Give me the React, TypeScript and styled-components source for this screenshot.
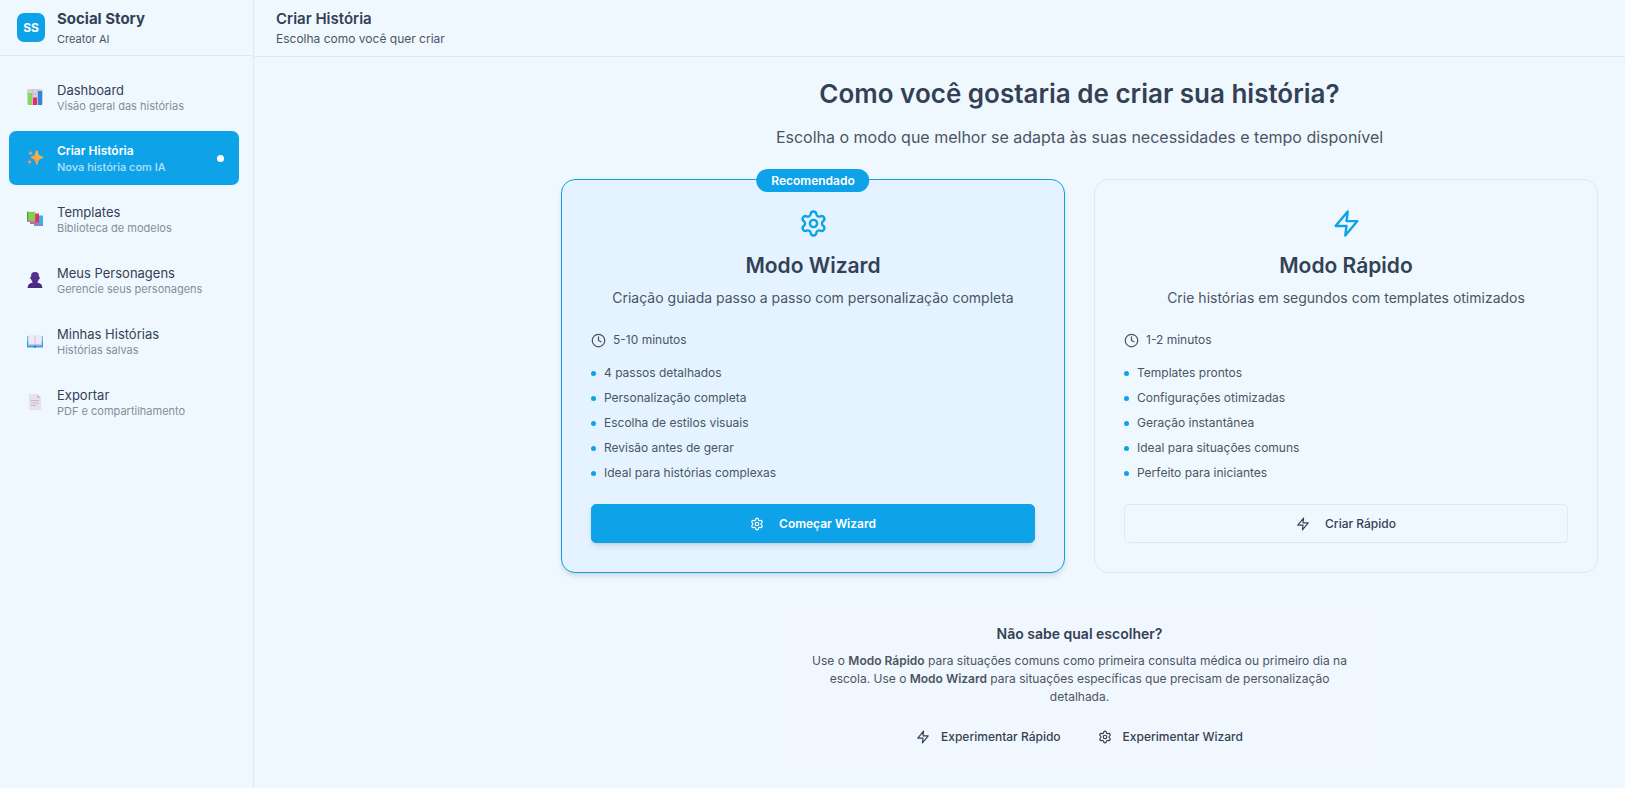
import React, { ReactNode } from 'react';
import styled, { createGlobalStyle, css } from 'styled-components';
import { Clock, Settings } from 'lucide-react';

const color = {
  page: '#f0f8ff',
  line: '#e1e8f0',
  primary: '#0ea2e9',
  heading: '#334155',
  text: '#4b5563',
  muted: '#848d9a',
};

const GlobalStyle = createGlobalStyle`
  *, *::before, *::after { box-sizing: border-box; }
  body {
    margin: 0;
    background: ${color.page};
    color: ${color.heading};
    font-family: Inter, "Liberation Sans", sans-serif;
    font-size: 12px;
    line-height: 18px;
  }
  h1, h2, h3, p, ul { margin: 0; padding: 0; }
  ul { list-style: none; }
  button { font: inherit; color: inherit; cursor: pointer; }
`;

const Shell = styled.div`
  display: flex;
  min-height: 100vh;
`;

const Sidebar = styled.aside`
  flex: 0 0 254px;
  border-right: 1px solid ${color.line};
`;

const Brand = styled.div`
  display: flex;
  align-items: center;
  gap: 12px;
  height: 56px;
  padding: 0 17px;
  border-bottom: 1px solid ${color.line};
`;

const Logo = styled.div`
  display: grid;
  place-items: center;
  width: 28px;
  height: 29px;
  border-radius: 7px;
  background: ${color.primary};
  color: #fff;
  font-weight: 700;
`;

const BrandText = styled.div`
  display: grid;
  gap: 2px;
`;

const BrandName = styled.strong`
  font-size: 15px;
  font-weight: 700;
  line-height: 20px;
`;

const BrandTag = styled.span`
  color: ${color.text};
  font-size: 11px;
  line-height: 16px;
`;

const Nav = styled.nav`
  display: grid;
  gap: 7px;
  padding: 14px 14px 14px 9px;
`;

const NavItem = styled.a<{ $active?: boolean }>`
  display: flex;
  align-items: center;
  gap: 14px;
  height: 54px;
  padding: 0 15px 0 18px;
  border-radius: 7px;
  color: ${color.heading};
  font-size: 13px;
  text-decoration: none;
  ${(p) =>
    p.$active &&
    css`
      background: ${color.primary};
      color: #fff;
      font-size: 12px;
      font-weight: 600;
    `}
`;

const NavText = styled.span`
  display: grid;
  flex: 1;
`;

const NavHint = styled.span<{ $active?: boolean }>`
  color: ${(p) => (p.$active ? '#b6e2f9' : color.muted)};
  font-size: 11px;
  font-weight: ${(p) => (p.$active ? 500 : 400)};
  line-height: 14px;
`;

const ActiveDot = styled.span`
  width: 7px;
  height: 7px;
  border-radius: 50%;
  background: #fff;
`;

const Main = styled.main`
  flex: 1;
  min-width: 0;
`;

const TopBar = styled.header`
  display: grid;
  align-content: center;
  height: 57px;
  padding: 0 22px;
  border-bottom: 1px solid ${color.line};
  color: ${color.text};
`;

const TopTitle = styled.h2`
  color: ${color.heading};
  font-size: 15px;
  font-weight: 600;
  line-height: 22px;
`;

const Content = styled.div`
  width: 100%;
  max-width: 1092px;
  margin-left: auto;
  padding: 21px 27px 13px 28px;
`;

const Intro = styled.div`
  display: grid;
  gap: 15px;
  margin-bottom: 30px;
  text-align: center;
`;

const PageTitle = styled.h1`
  font-size: 26px;
  font-weight: 600;
  line-height: 32px;
`;

const Lead = styled.p`
  color: ${color.text};
  font-size: 16px;
  line-height: 24px;
`;

const Modes = styled.div`
  display: grid;
  grid-template-columns: 1fr 1fr;
  gap: 29px;
`;

const ModeCard = styled.section<{ $featured?: boolean }>`
  position: relative;
  display: flex;
  flex-direction: column;
  align-items: center;
  padding: 29px;
  border: 1px solid ${color.line};
  border-radius: 14px;
  ${(p) =>
    p.$featured &&
    css`
      border-color: ${color.primary};
      background: #e4f3ff;
      box-shadow: 0 4px 6px -1px rgba(0, 0, 0, 0.1), 0 2px 4px -2px rgba(0, 0, 0, 0.1);
    `}
`;

const Ribbon = styled.span`
  position: absolute;
  top: -11px;
  left: 50%;
  padding: 0 15px;
  border-radius: 12px;
  background: ${color.primary};
  color: #fff;
  font-weight: 600;
  line-height: 23px;
  transform: translateX(-50%);
`;

const ModeIcon = styled.span`
  display: flex;
  margin-bottom: 14px;
  color: ${color.primary};
`;

const ModeTitle = styled.h2`
  margin-bottom: 8px;
  font-size: 21px;
  font-weight: 600;
  line-height: 28px;
`;

const ModeSummary = styled.p`
  margin-bottom: 23px;
  color: ${color.text};
  font-size: 14px;
  line-height: 20px;
  text-align: center;
`;

const Duration = styled.p`
  display: flex;
  align-items: center;
  align-self: stretch;
  gap: 7px;
  margin-bottom: 15px;
  color: ${color.text};
`;

const Features = styled.ul`
  display: grid;
  align-self: stretch;
  gap: 7px;
  margin-bottom: 22px;
  color: ${color.text};
`;

const Feature = styled.li`
  display: flex;
  align-items: center;
  gap: 8px;

  &::before {
    content: '';
    width: 5px;
    height: 5px;
    border-radius: 50%;
    background: ${color.primary};
  }
`;

const ModeButton = styled.button<{ $primary?: boolean }>`
  display: flex;
  align-items: center;
  justify-content: center;
  align-self: stretch;
  gap: 15px;
  height: 39px;
  border: 1px solid ${color.line};
  border-radius: 5px;
  background: transparent;
  font-weight: 500;
  ${(p) =>
    p.$primary &&
    css`
      border-color: ${color.primary};
      background: ${color.primary};
      color: #fff;
      font-weight: 600;
      box-shadow: 0 4px 6px -1px rgba(0, 0, 0, 0.1), 0 2px 4px -2px rgba(0, 0, 0, 0.1);
    `}
`;

const Help = styled.section`
  max-width: 605px;
  margin: 29px auto 0;
  padding: 22px 32px;
  border-radius: 7px;
  background: #f1f7fe;
  text-align: center;
`;

const HelpTitle = styled.h3`
  margin-bottom: 8px;
  font-size: 14px;
  font-weight: 600;
  line-height: 20px;
`;

const HelpText = styled.p`
  margin-bottom: 14px;
  color: ${color.text};

  strong { font-weight: 600; }
`;

const HelpActions = styled.div`
  display: flex;
  justify-content: center;
  gap: 11px;
`;

const GhostButton = styled.button`
  display: flex;
  align-items: center;
  gap: 11px;
  height: 33px;
  padding: 0 13px;
  border: 0;
  background: transparent;
  font-weight: 500;
`;

function Bolt({ size }: { size: number }) {
  return (
    <svg
      width={size}
      height={size}
      viewBox="0 0 24 24"
      fill="none"
      stroke="currentColor"
      strokeWidth="2"
      strokeLinecap="round"
      strokeLinejoin="round"
      aria-hidden="true"
    >
      <path d="M13 2 3 14h9l-1 8 10-12h-9z" />
    </svg>
  );
}

function Glyph({ children }: { children: ReactNode }) {
  return (
    <svg width="16" height="16" viewBox="0 0 16 16" aria-hidden="true">
      {children}
    </svg>
  );
}

const chartGlyph = (
  <Glyph>
    <rect width="16" height="16" rx="1.5" fill="#d5cfe0" />
    <path d="M0 5h16M0 10h16M5.5 0v16M10.5 0v16" stroke="#bdb4cc" strokeWidth=".6" />
    <rect x="1" y="4" width="4" height="12" fill="#86d957" />
    <rect x="6" y="8.500" width="4" height="7.500" fill="#e32b6b" />
    <rect x="11" y="2" width="4" height="14" fill="#2f86d6" />
  </Glyph>
);

const sparklesGlyph = (
  <Glyph>
    <defs>
      <linearGradient id="spark" x1="0" y1="1" x2="1" y2="0">
        <stop offset="0" stopColor="#f58a4b" />
        <stop offset="1" stopColor="#fbc840" />
      </linearGradient>
    </defs>
    <path
      d="M9.800.6c.6 0 .9.500 1.100 1.300.8 3 1.100 3.500 3.900 4.300.8.200 1.200.6 1.200 1.200s-.4 1-1.200 1.200c-2.800.8-3.100 1.400-3.900 4.700-.2.900-.5 1.500-1.100 1.500s-.9-.6-1.100-1.500c-.8-3.300-1.100-3.900-3.900-4.700-.8-.2-1.200-.6-1.200-1.200s.4-1 1.200-1.200c2.800-.8 3.100-1.300 3.900-4.300.2-.8.500-1.300 1.100-1.300z"
      fill="url(#spark)"
    />
    <path d="M3.600.8 4.300 2.500 6 3.200 4.300 3.900 3.600 5.600 2.900 3.900 1.200 3.200 2.900 2.500z" fill="#f9a566" />
    <path d="M2.600 9.200 3.400 11.200 5.300 12 3.400 12.800 2.600 14.800 1.800 12.800 0 12 1.800 11.200z" fill="#f79a5c" />
  </Glyph>
);

const booksGlyph = (
  <Glyph>
    <path d="M7 4.500h9V14.800H7z" fill="#35b3ee" />
    <path d="M7 13.300h9v1.500H7z" fill="#8d7fc0" />
    <path d="M3 2.500h9v10.300H3z" fill="#e5305f" />
    <path d="M3 11.400h9v1.400H3z" fill="#b779ad" />
    <path d="M0 .8h8.200v10H0z" fill="#86cc4e" />
    <path d="M0 .8h1.200v10H0z" fill="#4d9a53" />
    <path d="M0 9.600h8.200v1.400H0z" fill="#a792b4" />
  </Glyph>
);

const personGlyph = (
  <Glyph>
    <path d="M4.200 3.200C4.200 1.200 5.600 0 8 0s3.800 1.200 3.800 3.200v3.600c0 2.200-1.600 3.900-3.800 3.900S4.200 9 4.200 6.800z" fill="#56308f" />
    <rect x="3.200" y="4.600" width="9.600" height="2.800" rx="1.300" fill="#50308a" />
    <path d="M5.600 8.600h4.800v2c3.200.6 5 2.400 5 5.400H.6c0-3 1.800-4.800 5-5.400z" fill="#4a2982" />
  </Glyph>
);

const openBookGlyph = (
  <Glyph>
    <path d="M0 3h16v11.500H0z" fill="#3f9fe4" />
    <path d="M0 3h16v5H0z" fill="#75bdf0" />
    <path d="M1.300 2h6L8 2.700l.7-.7h6v10.300H1.300z" fill="#f0eaf7" />
    <path d="M7.400 2.200h1.200v10.300H7.400z" fill="#d5c9e6" />
    <path d="M1.300 11.300h13.400v1H1.300z" fill="#beb2dc" />
    <path d="M7 12.500h2v2H7z" fill="#2677c4" />
  </Glyph>
);

const pageGlyph = (
  <Glyph>
    <path d="M2 0h8l4 4v12H2z" fill="#e8dff0" />
    <path d="M10 0l4 4h-4z" fill="#cabfd6" />
    <path d="M4 6.500h8M4 9h8M4 11.500h5" stroke="#c3b9cb" strokeWidth="1" />
  </Glyph>
);

const navItems = [
  { label: 'Dashboard', hint: 'Visão geral das histórias', icon: chartGlyph },
  { label: 'Criar História', hint: 'Nova história com IA', icon: sparklesGlyph, active: true },
  { label: 'Templates', hint: 'Biblioteca de modelos', icon: booksGlyph },
  { label: 'Meus Personagens', hint: 'Gerencie seus personagens', icon: personGlyph },
  { label: 'Minhas Histórias', hint: 'Histórias salvas', icon: openBookGlyph },
  { label: 'Exportar', hint: 'PDF e compartilhamento', icon: pageGlyph },
];

const modes = [
  {
    title: 'Modo Wizard',
    summary: 'Criação guiada passo a passo com personalização completa',
    duration: '5-10 minutos',
    features: [
      '4 passos detalhados',
      'Personalização completa',
      'Escolha de estilos visuais',
      'Revisão antes de gerar',
      'Ideal para histórias complexas',
    ],
    action: 'Começar Wizard',
    featured: true,
    Icon: Settings,
  },
  {
    title: 'Modo Rápido',
    summary: 'Crie histórias em segundos com templates otimizados',
    duration: '1-2 minutos',
    features: [
      'Templates prontos',
      'Configurações otimizadas',
      'Geração instantânea',
      'Ideal para situações comuns',
      'Perfeito para iniciantes',
    ],
    action: 'Criar Rápido',
    featured: false,
    Icon: Bolt,
  },
];

export default function App() {
  return (
    <>
      <GlobalStyle />
      <Shell>
        <Sidebar>
          <Brand>
            <Logo>SS</Logo>
            <BrandText>
              <BrandName>Social Story</BrandName>
              <BrandTag>Creator AI</BrandTag>
            </BrandText>
          </Brand>
          <Nav>
            {navItems.map((item) => (
              <NavItem
                key={item.label}
                href="#"
                $active={item.active}
                aria-current={item.active ? 'page' : undefined}
              >
                {item.icon}
                <NavText>
                  {item.label}
                  <NavHint $active={item.active}>{item.hint}</NavHint>
                </NavText>
                {item.active && <ActiveDot />}
              </NavItem>
            ))}
          </Nav>
        </Sidebar>
        <Main>
          <TopBar>
            <TopTitle>Criar História</TopTitle>
            <p>Escolha como você quer criar</p>
          </TopBar>
          <Content>
            <Intro>
              <PageTitle>Como você gostaria de criar sua história?</PageTitle>
              <Lead>Escolha o modo que melhor se adapta às suas necessidades e tempo disponível</Lead>
            </Intro>
            <Modes>
              {modes.map(({ Icon, ...mode }) => (
                <ModeCard key={mode.title} $featured={mode.featured}>
                  {mode.featured && <Ribbon>Recomendado</Ribbon>}
                  <ModeIcon>
                    <Icon size={29} />
                  </ModeIcon>
                  <ModeTitle>{mode.title}</ModeTitle>
                  <ModeSummary>{mode.summary}</ModeSummary>
                  <Duration>
                    <Clock size={15} />
                    {mode.duration}
                  </Duration>
                  <Features>
                    {mode.features.map((feature) => (
                      <Feature key={feature}>{feature}</Feature>
                    ))}
                  </Features>
                  <ModeButton type="button" $primary={mode.featured}>
                    <Icon size={14} />
                    {mode.action}
                  </ModeButton>
                </ModeCard>
              ))}
            </Modes>
            <Help>
              <HelpTitle>Não sabe qual escolher?</HelpTitle>
              <HelpText>
                Use o <strong>Modo Rápido</strong> para situações comuns como primeira consulta médica ou
                primeiro dia na escola. Use o <strong>Modo Wizard</strong> para situações específicas que
                precisam de personalização detalhada.
              </HelpText>
              <HelpActions>
                <GhostButton type="button">
                  <Bolt size={14} />
                  Experimentar Rápido
                </GhostButton>
                <GhostButton type="button">
                  <Settings size={14} />
                  Experimentar Wizard
                </GhostButton>
              </HelpActions>
            </Help>
          </Content>
        </Main>
      </Shell>
    </>
  );
}
